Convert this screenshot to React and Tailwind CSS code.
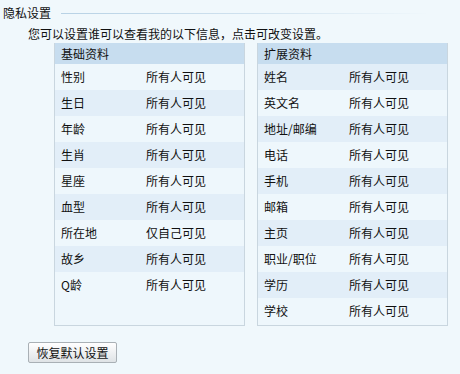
import React from "react";

const left = [
  ["性别", "所有人可见"],
  ["生日", "所有人可见"],
  ["年龄", "所有人可见"],
  ["生肖", "所有人可见"],
  ["星座", "所有人可见"],
  ["血型", "所有人可见"],
  ["所在地", "仅自己可见"],
  ["故乡", "所有人可见"],
  ["Q龄", "所有人可见"],
];

const right = [
  ["姓名", "所有人可见"],
  ["英文名", "所有人可见"],
  ["地址/邮编", "所有人可见"],
  ["电话", "所有人可见"],
  ["手机", "所有人可见"],
  ["邮箱", "所有人可见"],
  ["主页", "所有人可见"],
  ["职业/职位", "所有人可见"],
  ["学历", "所有人可见"],
  ["学校", "所有人可见"],
];

function Table({ title, rows, darkOdd }) {
  return (
    <div className="w-[191px] h-[283px] border border-[#c9d6df] border-t-0 flex flex-col">
      <div className="h-[21px] bg-[#c7ddef] pl-[6px] leading-[21px]">{title}</div>
      {rows.map(([k, v], i) => {
        const dark = darkOdd ? i % 2 === 0 : i % 2 === 1;
        return (
          <div
            key={k}
            className={
              "h-[26px] flex items-center pl-[6px] " +
              (dark ? "bg-[#e2eef8]" : "bg-[#eef7fc]")
            }
          >
            <span className="w-[85px]">{k}</span>
            <span>{v}</span>
          </div>
        );
      })}
      <div className="flex-1 bg-[#eef7fc]" />
    </div>
  );
}

export default function App() {
  return (
    <div className="w-[460px] h-[374px] bg-[#f0f8fc] text-[12px] text-[#111] font-['Noto_Sans_CJK_SC',sans-serif] flex flex-col">
      <div className="h-[26px] flex items-center pl-[3px]">
        <span className="leading-[14px]">隐私设置</span>
        <div className="ml-[10px] mr-[30px] flex-1 h-px bg-gradient-to-r from-[#b8d2e5] via-[#cfe1ee] to-[#f0f8fc]" />
      </div>
      <div className="h-[16px] leading-[16px] pl-[28px]">
        您可以设置谁可以查看我的以下信息，点击可改变设置。
      </div>
      <div className="mt-[1px] pl-[54px] flex gap-[12px]">
        <Table title="基础资料" rows={left} darkOdd={false} />
        <Table title="扩展资料" rows={right} darkOdd={true} />
      </div>
      <div className="mt-[16px] pl-[28px]">
        <button className="w-[89px] h-[21px] border border-[#a9b0b5] rounded-[2px] bg-gradient-to-b from-[#ffffff] to-[#dfe3e6] text-[12px] leading-[19px] text-[#111]">
          恢复默认设置
        </button>
      </div>
    </div>
  );
}
